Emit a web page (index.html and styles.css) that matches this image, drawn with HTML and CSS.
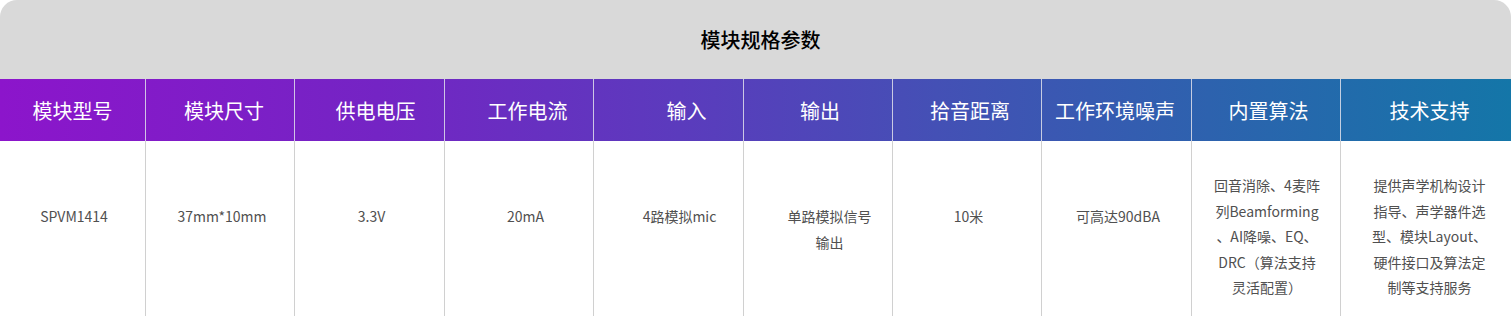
FILE: index.html
```html
<!DOCTYPE html>
<html lang="zh-CN">
<head>
<meta charset="utf-8">
<title>模块规格参数</title>
<link rel="stylesheet" href="styles.css">
</head>
<body>
<section class="spec">
  <div class="spec-title">模块规格参数</div>
  <div class="spec-head">
    <div class="hc">模块型号</div>
    <div class="hc h2">模块尺寸</div>
    <div class="hc h3">供电电压</div>
    <div class="hc h4">工作电流</div>
    <div class="hc h5">输入</div>
    <div class="hc h6">输出</div>
    <div class="hc h7">拾音距离</div>
    <div class="hc h8">工作环境噪声</div>
    <div class="hc h9">内置算法</div>
    <div class="hc h10">技术支持</div>
  </div>
  <div class="spec-body">
    <div class="bc b1">SPVM1414</div>
    <div class="bc b2">37mm*10mm</div>
    <div class="bc b3">3.3V</div>
    <div class="bc b4">20mA</div>
    <div class="bc b5">4路模拟mic</div>
    <div class="bc b6"><span class="ln">单路模拟信号</span><span class="ln">输出</span></div>
    <div class="bc b7">10米</div>
    <div class="bc b8">可高达90dBA</div>
    <div class="bc multi b9"><span class="ln">回音消除、4麦阵</span><span class="ln">列Beamforming</span><span class="ln">、AI降噪、EQ、</span><span class="ln">DRC（算法支持</span><span class="ln">灵活配置）</span></div>
    <div class="bc multi b10"><span class="ln">提供声学机构设计</span><span class="ln">指导、声学器件选</span><span class="ln">型、模块Layout、</span><span class="ln">硬件接口及算法定</span><span class="ln">制等支持服务</span></div>
  </div>
</section>
</body>
</html>
```

FILE: styles.css
```css
* { box-sizing: border-box; }

html, body {
  margin: 0;
  padding: 0;
  background: #ffffff;
}

body {
  font-family: "Noto Sans CJK SC", "Noto Sans", sans-serif;
  overflow: hidden;
}

.spec {
  width: 1511px;
}

.spec-title {
  height: 79px;
  background: #d9d9d9;
  border-radius: 17px 17px 0 0;
  display: flex;
  align-items: center;
  justify-content: center;
  padding-left: 10px;
  font-size: 20px;
  font-weight: 500;
  color: #000000;
}

.spec-head,
.spec-body {
  display: grid;
  grid-template-columns: 145px 149px 150px 149px 150px 149px 149px 150px 149px 171px;
}

.spec-head {
  height: 62px;
  background: linear-gradient(90deg, #8c15cb 0%, #7424c4 25%, #5b3bbd 45%, #4450b5 62%, #2d62ae 80%, #1476a8 100%);
}

.hc {
  display: flex;
  align-items: center;
  justify-content: center;
  color: #ffffff;
  font-size: 20px;
  white-space: nowrap;
}

.hc + .hc {
  border-left: 1px solid rgba(225, 225, 235, 0.85);
}

.h2 { padding-left: 8px; }
.h3 { padding-left: 12px; }
.h4 { padding-left: 17px; }
.h5 { padding-left: 36px; }
.h6 { padding-left: 4px; }
.h7 { padding-left: 6px; }
.h8 { padding-right: 3px; }
.h9 { padding-left: 5px; }
.h10 { padding-left: 7px; }

.spec-body {
  height: 175px;
}

.bc {
  padding-top: 63px;
  text-align: center;
  font-size: 14px;
  line-height: 25.6px;
  color: #505050;
  white-space: nowrap;
}

.bc + .bc {
  border-left: 1px solid #d0d0d0;
}

.bc.multi {
  padding-top: 32px;
}

.ln {
  display: block;
}

.b1 { padding-left: 3px; }
.b2 { padding-left: 4px; }
.b3 { padding-left: 4px; }
.b4 { padding-left: 13px; }
.b5 { padding-left: 22px; }
.b6 { padding-left: 23px; }
.b7 { padding-left: 3px; }
.b8 { padding-left: 3px; }
.b9 { padding-left: 2px; }
.b10 { padding-left: 7px; }
```
